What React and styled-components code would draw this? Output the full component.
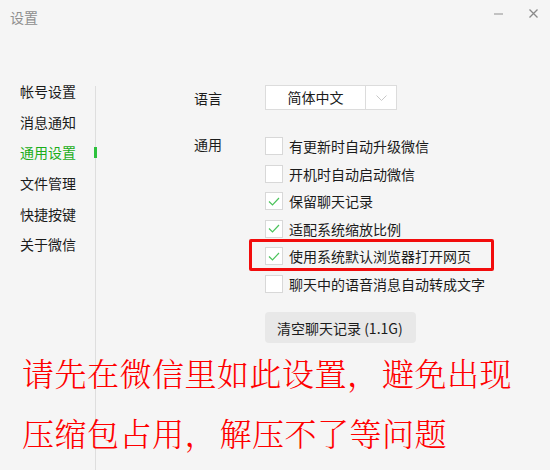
import styled, { createGlobalStyle } from "styled-components";

const GlobalStyle = createGlobalStyle`
  html, body {
    margin: 0;
    padding: 0;
    background: #f5f5f5;
  }
  body {
    font-family: "Noto Sans CJK SC", "Noto Sans", sans-serif;
    color: #1b1b1b;
  }
`;

const menu = ["帐号设置", "消息通知", "通用设置", "文件管理", "快捷按键", "关于微信"];

const options = [
  { label: "有更新时自动升级微信", checked: false },
  { label: "开机时自动启动微信", checked: false },
  { label: "保留聊天记录", checked: true },
  { label: "适配系统缩放比例", checked: true },
  { label: "使用系统默认浏览器打开网页", checked: true, marked: true },
  { label: "聊天中的语音消息自动转成文字", checked: false },
];

const Check = () => (
  <svg width="12" height="9" viewBox="0 0 12 9" fill="none">
    <path d="M1 4.5 L4.5 8 L11 1" stroke="#4cc35c" strokeWidth="1.2" />
  </svg>
);

const Chevron = () => (
  <svg width="11" height="6" viewBox="0 0 11 6" fill="none">
    <path d="M0.5 0.5 L5.5 5.5 L10.5 0.5" stroke="#c8c8c8" strokeWidth="1" />
  </svg>
);

const App = () => {
  return (
    <Window>
      <GlobalStyle />
      <TitleBar>
        <Title>设置</Title>
        <WinBtns>
          <MinBtn />
          <CloseBtn>
            <svg width="9" height="9" viewBox="0 0 9 9">
              <path d="M0.5 0.5 L8.5 8.5 M8.5 0.5 L0.5 8.5" stroke="#8a8a8a" strokeWidth="1.3" />
            </svg>
          </CloseBtn>
        </WinBtns>
      </TitleBar>
      <Body>
        <Nav>
          {menu.map((m) => (
            <NavItem key={m} $active={m === "通用设置"}>{m}</NavItem>
          ))}
        </Nav>
        <Divider />
        <Content>
          <Label>语言</Label>
          <Select>
            <SelectValue>简体中文</SelectValue>
            <SelectArrow>
              <Chevron />
            </SelectArrow>
          </Select>
          <Label $top>通用</Label>
          <OptionList>
            {options.map((o) => (
              <Option key={o.label} $marked={o.marked}>
                <Box>{o.checked && <Check />}</Box>
                <span>{o.label}</span>
              </Option>
            ))}
            <ClearBtn>清空聊天记录 (1.1G)</ClearBtn>
          </OptionList>
        </Content>
      </Body>
      <Note>
        <NoteLine>
          请先在微信里如此设置<Comma>，</Comma>避免出现
        </NoteLine>
        <NoteLine>
          压缩包占用<Comma>，</Comma>解压不了等问题
        </NoteLine>
      </Note>
    </Window>
  );
};

export default App;

const Window = styled.div`
  position: relative;
  width: 550px;
  height: 470px;
  overflow: hidden;
  background: #f5f5f5;
  display: flex;
  flex-direction: column;
`;

const TitleBar = styled.div`
  height: 34px;
  display: flex;
  align-items: flex-start;
  justify-content: space-between;
  padding: 0 12px 0 10px;
`;

const Title = styled.div`
  margin-top: 8px;
  font-size: 14px;
  line-height: 18px;
  color: #8f8f8f;
`;

const WinBtns = styled.div`
  display: flex;
  align-items: center;
  gap: 26px;
  margin-top: 9px;
  height: 9px;
`;

const MinBtn = styled.div`
  width: 9px;
  height: 2px;
  margin-top: 1px;
  background: #c2c2c2;
`;

const CloseBtn = styled.div`
  width: 9px;
  height: 9px;
  display: flex;
`;

const Body = styled.div`
  flex: 1;
  display: flex;
  padding-top: 42px;
`;

const Nav = styled.div`
  width: 95px;
  display: flex;
  flex-direction: column;
  padding-left: 20px;
  box-sizing: border-box;
`;

const NavItem = styled.div`
  position: relative;
  height: 30.7px;
  line-height: 30.7px;
  font-size: 14px;
  color: ${(p) => (p.$active ? "#1aad19" : "#1b1b1b")};

  &::after {
    content: "";
    display: ${(p) => (p.$active ? "block" : "none")};
    position: absolute;
    right: -2px;
    top: 10px;
    width: 3px;
    height: 11px;
    background: #2cc13c;
  }
`;

const Divider = styled.div`
  width: 1px;
  margin-top: 10px;
  background: #dedede;
`;

const Content = styled.div`
  display: grid;
  grid-template-columns: 71px auto;
  grid-template-rows: auto auto;
  row-gap: 27px;
  align-content: start;
  padding: 9px 0 0 98px;
`;

const Label = styled.div`
  font-size: 14px;
  line-height: 18px;
  align-self: ${(p) => (p.$top ? "start" : "center")};
  margin-top: ${(p) => (p.$top ? "-2px" : "0")};
`;

const Select = styled.div`
  width: 132px;
  height: 25px;
  box-sizing: border-box;
  border: 1px solid #dcdcdc;
  background: #fff;
  display: flex;
`;

const SelectValue = styled.div`
  flex: 1;
  text-align: center;
  font-size: 14px;
  line-height: 23px;
  border-right: 1px solid #dcdcdc;
`;

const SelectArrow = styled.div`
  width: 30px;
  display: flex;
  align-items: center;
  justify-content: center;
`;

const OptionList = styled.div`
  display: flex;
  flex-direction: column;
  align-items: flex-start;
  gap: 9.5px;
`;

const Option = styled.div`
  position: relative;
  display: flex;
  align-items: center;
  gap: 6px;
  height: 18px;
  font-size: 14px;
  white-space: nowrap;

  &::before {
    content: "";
    display: ${(p) => (p.$marked ? "block" : "none")};
    position: absolute;
    left: -16px;
    top: -8px;
    width: 245px;
    height: 32px;
    box-sizing: border-box;
    border: 3px solid #f20c0c;
    border-radius: 2px;
  }
`;

const Box = styled.div`
  width: 18px;
  height: 18px;
  box-sizing: border-box;
  border: 1px solid #d8d8d8;
  background: #fff;
  display: flex;
  align-items: center;
  justify-content: center;
`;

const ClearBtn = styled.button`
  margin-top: 10px;
  width: 151px;
  height: 31px;
  border: none;
  border-radius: 4px;
  background: #e8e8e8;
  font-family: "Noto Sans CJK SC", "Noto Sans", sans-serif;
  font-size: 14px;
  color: #1b1b1b;
  padding: 0 12px;
  text-align: left;
`;

const Note = styled.div`
  position: absolute;
  left: 22px;
  top: 342px;
  font-family: "Noto Serif CJK SC", "Noto Sans CJK SC", serif;
  font-weight: 300;
  font-size: 32px;
  letter-spacing: 0.5px;
  line-height: 60px;
  color: #ff0000;
  white-space: nowrap;
`;

const NoteLine = styled.div``;

const Comma = styled.span`
  display: inline-block;
  width: 35px;
`;
